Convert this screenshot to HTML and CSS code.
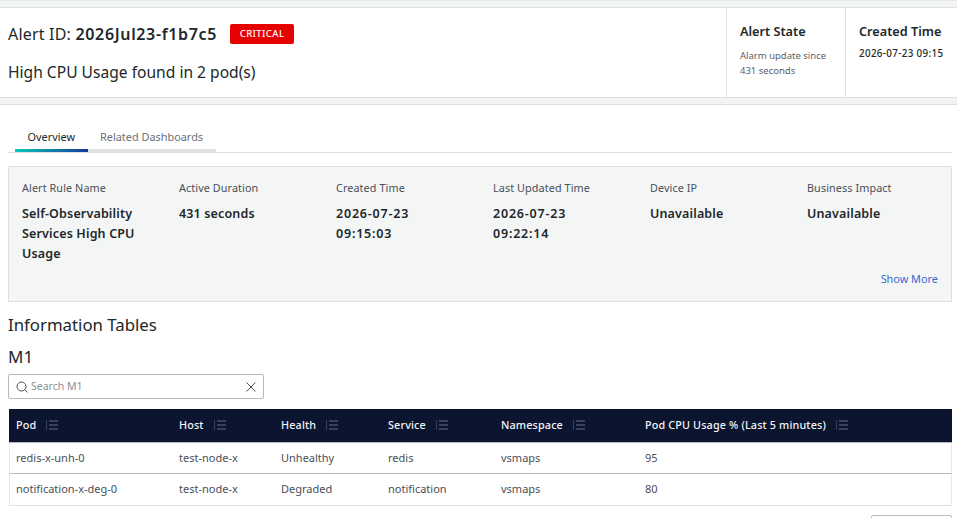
FILE: index.html
```html
<!DOCTYPE html>
<html lang="en">
<head>
	<meta charset="UTF-8">
	<title>Alert Details</title>
	<link rel="stylesheet" href="styles.css">
</head>
<body>
	<svg class="defs" width="0" height="0">
		<symbol id="sort" viewBox="0 0 12 10">
			<path d="M0 1h1M0 3h1M0 5h1M0 7h1M0 9h1" stroke="#666f85" stroke-width="1" fill="none"/>
			<path d="M3 1h9M3 5h9M3 9h9" stroke="#666f85" stroke-width="1" fill="none"/>
		</symbol>
	</svg>
	<div class="band band-top"></div>
	<header class="head">
		<div class="head-main">
			<div class="alert-line">
				<span class="alert-id">Alert ID: <b>2026Jul23-f1b7c5</b></span>
				<span class="badge">CRITICAL</span>
			</div>
			<div class="alert-desc">High CPU Usage found in 2 pod(s)</div>
		</div>
		<div class="head-state">
			<h4>Alert State</h4>
			<p>Alarm update since<br>431 seconds</p>
		</div>
		<div class="head-created">
			<h4>Created Time</h4>
			<p>2026-07-23 09:15</p>
		</div>
	</header>
	<div class="band"></div>
	<main class="content">
		<div class="tabs">
			<div class="tab active">Overview</div>
			<div class="tab">Related Dashboards</div>
		</div>
		<section class="panel">
			<div class="panel-grid">
				<div class="field">
					<div class="label">Alert Rule Name</div>
					<div class="value">Self-Observability Services High CPU Usage</div>
				</div>
				<div class="field">
					<div class="label">Active Duration</div>
					<div class="value">431 seconds</div>
				</div>
				<div class="field">
					<div class="label">Created Time</div>
					<div class="value date">2026-07-23<br>09:15:03</div>
				</div>
				<div class="field">
					<div class="label">Last Updated Time</div>
					<div class="value date">2026-07-23<br>09:22:14</div>
				</div>
				<div class="field">
					<div class="label">Device IP</div>
					<div class="value">Unavailable</div>
				</div>
				<div class="field">
					<div class="label">Business Impact</div>
					<div class="value">Unavailable</div>
				</div>
			</div>
			<div class="show-more">Show More</div>
		</section>
		<h2 class="section-title">Information Tables</h2>
		<h3 class="table-title">M1</h3>
		<div class="search">
			<svg class="search-icon" width="12" height="12" viewBox="0 0 12 12">
				<circle cx="5.500" cy="5.500" r="4.500" fill="none" stroke="#4a4f57" stroke-width="1"/>
				<path d="M8.700 8.700L11.500 11.500" stroke="#4a4f57" stroke-width="1" fill="none"/>
			</svg>
			<span class="search-text">Search M1</span>
			<svg class="search-clear" width="10" height="10" viewBox="0 0 10 10">
				<path d="M.5 .5l9 9M9.500 .5l-9 9" stroke="#4a4f57" stroke-width="1" fill="none"/>
			</svg>
		</div>
		<table class="grid">
			<thead>
				<tr>
					<th class="c-pod">Pod <svg class="sort"><use href="#sort"/></svg></th>
					<th class="c-host">Host <svg class="sort"><use href="#sort"/></svg></th>
					<th class="c-health">Health <svg class="sort"><use href="#sort"/></svg></th>
					<th class="c-service">Service <svg class="sort"><use href="#sort"/></svg></th>
					<th class="c-ns">Namespace <svg class="sort"><use href="#sort"/></svg></th>
					<th>Pod CPU Usage % (Last 5 minutes) <svg class="sort"><use href="#sort"/></svg></th>
				</tr>
			</thead>
			<tbody>
				<tr>
					<td>redis-x-unh-0</td>
					<td>test-node-x</td>
					<td>Unhealthy</td>
					<td>redis</td>
					<td>vsmaps</td>
					<td>95</td>
				</tr>
				<tr>
					<td>notification-x-deg-0</td>
					<td>test-node-x</td>
					<td>Degraded</td>
					<td>notification</td>
					<td>vsmaps</td>
					<td>80</td>
				</tr>
			</tbody>
		</table>
		<div class="pager">
			<div class="pager-box"></div>
		</div>
	</main>
</body>
</html>
```

FILE: styles.css
```css
html,body{
	margin:0;
	height:518px;
	overflow:hidden;
}
body{
	font-family:"Noto Sans","Liberation Sans",sans-serif;
	color:#21272a;
	background-color:#fff;
}
.defs{
	position:absolute;
}
.band{
	height:6px;
	background-color:#f2f4f4;
	border-bottom:1px solid #dde0e0;
}
.band-top{
	height:8px;
	box-sizing:border-box;
	border-top:1px solid #e6e8e8;
}
.head{
	height:89px;
	display:flex;
	border-bottom:1px solid #dde0e0;
}
.head-main{
	flex:1;
	padding:14px 0 0 8px;
}
.alert-line{
	display:flex;
	align-items:center;
	height:24px;
}
.alert-id{
	font-size:16px;
	letter-spacing:.2px;
}
.alert-id b{
	font-weight:600;
	letter-spacing:.65px;
}
.badge{
	margin-left:13px;
	width:64px;
	height:20px;
	line-height:20px;
	text-align:center;
	font-size:9.500px;
	font-weight:500;
	letter-spacing:.4px;
	color:#fff;
	background-color:#e60000;
	border-radius:2px;
}
.alert-desc{
	margin-top:14px;
	font-size:15.600px;
	line-height:24px;
}
.head-state,.head-created{
	border-left:1px solid #dde0e0;
	padding-top:15px;
	box-sizing:border-box;
}
.head-state{
	width:119px;
	padding-left:13px;
}
.head-created{
	width:112px;
	padding-left:13px;
}
h4{
	margin:0;
	font-size:12.700px;
	font-weight:600;
	line-height:17px;
}
.head-state p{
	margin:8px 0 0;
	font-size:9.500px;
	line-height:15px;
	color:#5a6068;
}
.head-created p{
	margin:6px 0 0;
	font-size:9.800px;
	font-weight:500;
	letter-spacing:.35px;
	line-height:15px;
	white-space:nowrap;
}
.content{
	padding:0 5px 0 8px;
}
.tabs{
	margin-top:20px;
	height:27px;
	padding-left:7px;
	display:flex;
	border-bottom:1px solid #dde0e0;
}
.tab{
	padding:0 12.500px;
	height:24px;
	line-height:24px;
	font-size:10.900px;
	color:#6a7078;
	border-bottom:3px solid #e2e4e6;
}
.tab.active{
	color:#21272a;
	border-bottom:3px solid transparent;
	border-image:linear-gradient(90deg,#0fc8bd,#123a96) 1;
}
.panel{
	margin-top:13px;
	height:136px;
	box-sizing:border-box;
	padding:12px 13px 0;
	background-color:#f4f6f6;
	border:1px solid #dde0e0;
	position:relative;
}
.panel-grid{
	display:grid;
	grid-template-columns:repeat(6,157px);
}
.label{
	font-size:10.800px;
	letter-spacing:.1px;
	line-height:17px;
	color:#4a4f57;
}
.value{
	margin-top:8px;
	padding-right:18px;
	font-size:12.500px;
	font-weight:600;
	letter-spacing:.15px;
	line-height:20px;
}
.value.date{
	letter-spacing:.8px;
}
.show-more{
	position:absolute;
	right:13px;
	bottom:14px;
	font-size:10.900px;
	line-height:16px;
	color:#3f66cf;
}
.section-title{
	margin:11px 0 0;
	font-size:16.800px;
	font-weight:400;
	line-height:23px;
}
.table-title{
	margin:9px 0 0;
	font-size:17px;
	font-weight:400;
	line-height:23px;
}
.search{
	margin-top:6px;
	width:256px;
	height:25px;
	box-sizing:border-box;
	border:1px solid #b8bbbe;
	border-radius:2px;
	display:flex;
	align-items:center;
	padding:0 7px;
}
.search-icon{
	flex:none;
}
.search-text{
	margin-left:3px;
	padding-bottom:2px;
	flex:1;
	font-size:10.500px;
	color:#8b9096;
}
.grid{
	margin-top:10px;
	margin-left:1px;
	width:943px;
	border-collapse:separate;
	border-spacing:0;
	table-layout:fixed;
}
.c-pod{
	width:163px;
}
.c-host{
	width:102px;
}
.c-health{
	width:107px;
}
.c-service{
	width:113px;
}
.c-ns{
	width:144px;
}
th{
	box-sizing:border-box;
	height:34px;
	padding:0 0 2px 7px;
	text-align:left;
	font-size:10.800px;
	font-weight:500;
	letter-spacing:.15px;
	color:#f2f4f8;
	background-color:#0b1530;
	border-bottom:1px solid #b8bbbe;
	white-space:nowrap;
}
.sort{
	width:12px;
	height:10px;
	margin-left:7px;
	vertical-align:-1px;
}
td{
	box-sizing:border-box;
	height:31px;
	padding:0 0 2px 7px;
	font-size:11px;
	color:#4a4f57;
	border-bottom:1px solid #b8bbbe;
}
tbody tr:last-child td{
	height:32px;
	border-bottom:1px solid #dde0e0;
}
tbody tr td:first-child{
	padding-left:6px;
	border-left:1px solid #e6e8e8;
}
tbody tr td:last-child{
	border-right:1px solid #e6e8e8;
}
.pager{
	margin-top:9px;
	height:3px;
	overflow:hidden;
	display:flex;
	justify-content:flex-end;
}
.pager-box{
	width:81px;
	height:30px;
	box-sizing:border-box;
	flex:none;
	border:1px solid #b8bbbe;
	border-radius:2px;
}
```
